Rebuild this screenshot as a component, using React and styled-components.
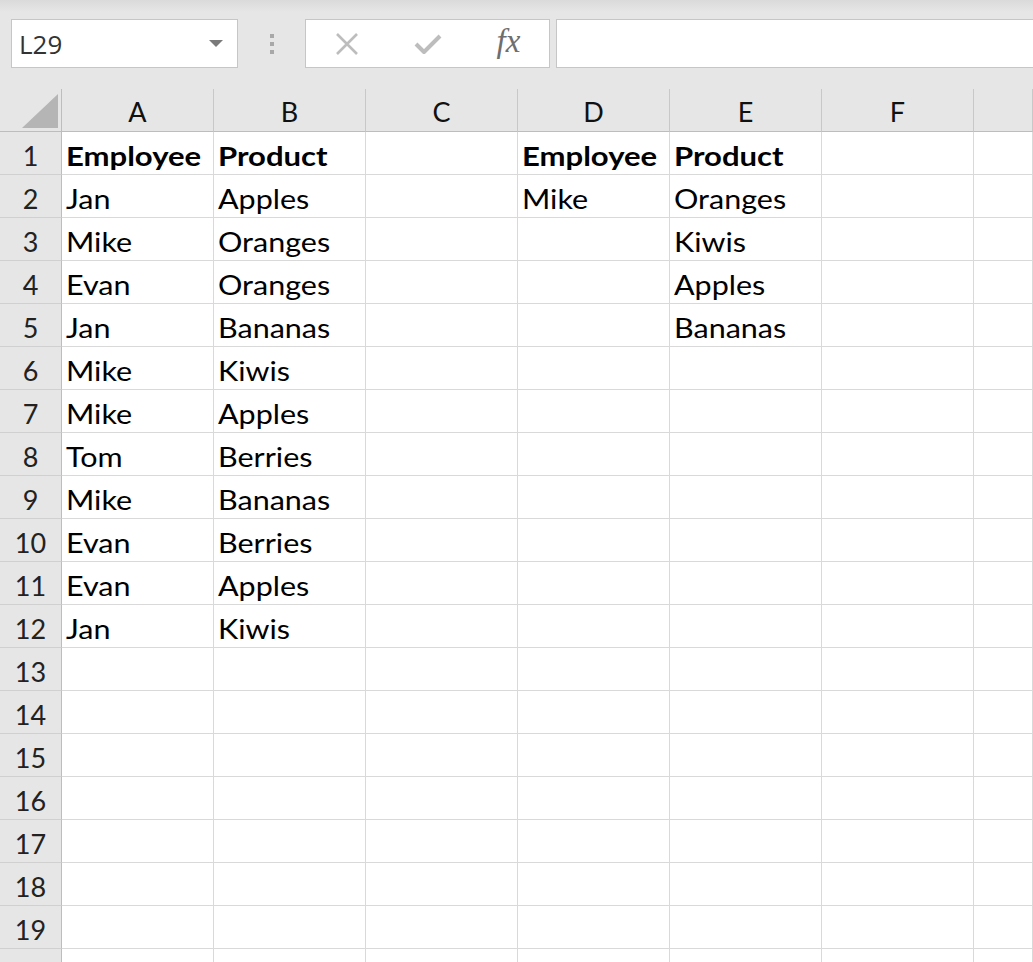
import styled, { createGlobalStyle } from "styled-components";

const GlobalStyle = createGlobalStyle`
  html, body {
    margin: 0;
    padding: 0;
    background: #ffffff;
    overflow: hidden;
  }
  * {
    box-sizing: border-box;
  }
`;

const Sheet = styled.div`
  width: 1033px;
  height: 962px;
  overflow: hidden;
  font-family: Lato, "Open Sans", sans-serif;
  color: #000;
`;

const FormulaBar = styled.div`
  height: 89px;
  display: flex;
  align-items: flex-start;
  padding: 19px 0 0 11px;
  background: linear-gradient(#dadada 0, #e6e6e6 12px, #e6e6e6 100%);
`;

const NameBox = styled.div`
  width: 227px;
  height: 49px;
  background: #fff;
  border: 1px solid #c6c6c6;
  display: flex;
  align-items: center;
  justify-content: space-between;
  padding: 0 14px 0 7px;
  font-size: 26px;
  color: #333;
  font-family: "Open Sans", Lato, sans-serif;
`;

const Caret = styled.span`
  width: 0;
  height: 0;
  border-left: 7px solid transparent;
  border-right: 7px solid transparent;
  border-top: 7px solid #7a7a7a;
`;

const Grip = styled.div`
  width: 67px;
  height: 49px;
  display: flex;
  flex-direction: column;
  align-items: center;
  justify-content: center;
  gap: 4px;
`;

const GripDot = styled.span`
  width: 4px;
  height: 4px;
  background: #a8a8a8;
`;

const ButtonsBox = styled.div`
  width: 245px;
  height: 49px;
  background: #fff;
  border: 1px solid #c6c6c6;
  display: grid;
  grid-template-columns: repeat(3, 1fr);
  align-items: center;
  justify-items: center;
`;

const Fx = styled.span`
  font-family: "Liberation Serif", serif;
  font-style: italic;
  font-size: 33px;
  line-height: 1;
  color: #6e6e6e;
  margin-top: -4px;
  margin-left: 0;
`;

const FormulaInput = styled.div`
  flex: 1;
  height: 49px;
  margin-left: 6px;
  background: #fff;
  border: 1px solid #c6c6c6;
  border-right: none;
`;

const Grid = styled.div`
  display: grid;
  grid-template-columns: 62px repeat(6, 152px) 1fr;
  grid-auto-rows: 43px;
`;

const Corner = styled.div`
  background: #e6e6e6;
  border-right: 1px solid #bdbdbd;
  border-bottom: 1px solid #bdbdbd;
  display: flex;
  align-items: flex-end;
  justify-content: flex-end;
  padding: 0 3px 3px 0;
`;

const ColHead = styled.div`
  background: #e6e6e6;
  border-right: 1px solid #c8c8c8;
  border-bottom: 1px solid #bdbdbd;
  display: flex;
  align-items: center;
  justify-content: center;
  font-size: 27px;
  color: #111;
  padding-top: 3px;
`;

const RowHead = styled.div`
  background: #e6e6e6;
  border-right: 1px solid #bdbdbd;
  border-bottom: 1px solid #d0d0d0;
  display: flex;
  align-items: flex-end;
  justify-content: center;
  font-size: 27px;
  color: #222;
  padding-bottom: 2px;
`;

const Cell = styled.div`
  border-right: 1px solid #d9d9d9;
  border-bottom: 1px solid #d9d9d9;
  display: flex;
  align-items: flex-end;
  padding: 0 0 2px 4px;
  font-size: 27px;
  font-weight: ${(p) => (p.$bold ? 700 : 400)};
  white-space: nowrap;
`;

/* the sheet font runs a little wider than Lato, so stretch it sideways */
const CellText = styled.span`
  display: inline-block;
  transform: scaleX(${(p) => (p.$bold ? 1.15 : 1.13)});
  transform-origin: left bottom;
`;

const columns = ["A", "B", "C", "D", "E", "F", ""];

const data = [
  ["Employee", "Product", "", "Employee", "Product"],
  ["Jan", "Apples", "", "Mike", "Oranges"],
  ["Mike", "Oranges", "", "", "Kiwis"],
  ["Evan", "Oranges", "", "", "Apples"],
  ["Jan", "Bananas", "", "", "Bananas"],
  ["Mike", "Kiwis"],
  ["Mike", "Apples"],
  ["Tom", "Berries"],
  ["Mike", "Bananas"],
  ["Evan", "Berries"],
  ["Evan", "Apples"],
  ["Jan", "Kiwis"],
];

function CancelIcon() {
  return (
    <svg width="26" height="26" viewBox="0 0 26 26">
      <path d="M3 3 L23 23 M23 3 L3 23" stroke="#bdbdbd" strokeWidth="2.6" fill="none" />
    </svg>
  );
}

function EnterIcon() {
  return (
    <svg width="28" height="24" viewBox="0 0 28 24">
      <path d="M2 12 L10 20 L26 4" stroke="#bdbdbd" strokeWidth="4" fill="none" strokeLinejoin="round" />
    </svg>
  );
}

function CornerTriangle() {
  return (
    <svg width="36" height="34" viewBox="0 0 36 34">
      <polygon points="0,34 36,34 36,0" fill="#b5b5b5" />
    </svg>
  );
}

export default function App() {
  // row 20 sits at the bottom edge, only its top gridline shows
  const rows = Array.from({ length: 20 }, (_, i) => data[i] || []);

  return (
    <Sheet>
      <GlobalStyle />
      <FormulaBar>
        <NameBox>
          L29
          <Caret />
        </NameBox>
        <Grip>
          <GripDot />
          <GripDot />
          <GripDot />
        </Grip>
        <ButtonsBox>
          <CancelIcon />
          <EnterIcon />
          <Fx>fx</Fx>
        </ButtonsBox>
        <FormulaInput />
      </FormulaBar>
      <Grid>
        <Corner>
          <CornerTriangle />
        </Corner>
        {columns.map((c, i) => (
          <ColHead key={i}>{c}</ColHead>
        ))}
        {rows.map((row, r) => [
          <RowHead key={`h${r}`}>{r < 19 ? r + 1 : ""}</RowHead>,
          ...columns.map((_, c) => (
            <Cell key={`${r}-${c}`} $bold={r === 0}>
              {row[c] ? <CellText $bold={r === 0}>{row[c]}</CellText> : null}
            </Cell>
          )),
        ])}
      </Grid>
    </Sheet>
  );
}
